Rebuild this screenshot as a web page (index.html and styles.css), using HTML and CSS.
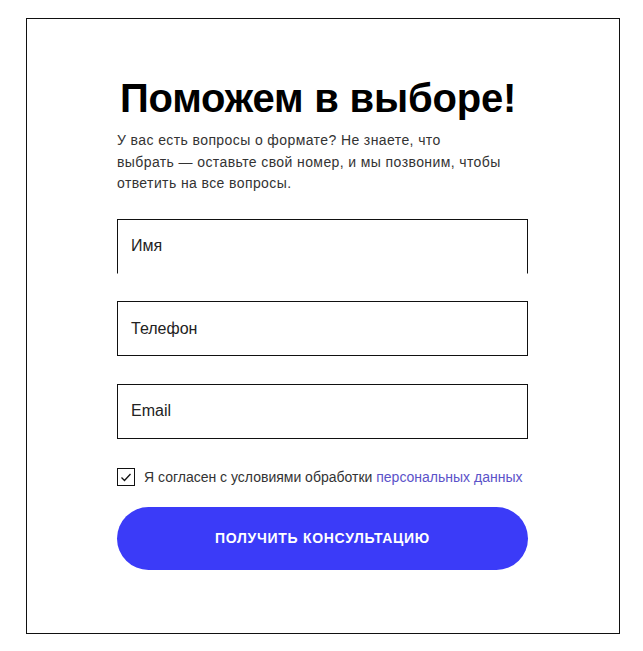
FILE: index.html
```html
<!DOCTYPE html>
<html lang="ru">
<head>
<meta charset="utf-8">
<title>Поможем в выборе!</title>
<link rel="stylesheet" href="styles.css">
</head>
<body>
<div class="frame">
  <form class="form">
    <h1 class="title">Поможем в выборе!</h1>
    <p class="lead">У вас есть вопросы о формате? Не знаете, что<br>выбрать — оставьте свой номер, и мы позвоним, чтобы<br>ответить на все вопросы.</p>
    <div class="fields">
      <label class="field field-open"><span class="placeholder">Имя</span></label>
      <label class="field"><span class="placeholder">Телефон</span></label>
      <label class="field"><span class="placeholder">Email</span></label>
    </div>
    <div class="agree">
      <span class="check">
        <svg width="14" height="14" viewBox="0 0 14 14"><path d="M2.5 7.5 L5.5 10.5 L11.5 4" fill="none" stroke="#111" stroke-width="1.3"/></svg>
      </span>
      <span class="agree-text">Я согласен с условиями обработки <a class="link" href="#">персональных данных</a></span>
    </div>
    <button type="button" class="submit">ПОЛУЧИТЬ КОНСУЛЬТАЦИЮ</button>
  </form>
</div>
</body>
</html>
```
FILE: styles.css
```css
html, body {
  margin: 0;
  padding: 0;
  background: #fff;
}
body {
  padding: 18px 0 0 26px;
  font-family: "Liberation Sans", Arial, sans-serif;
  color: #111;
}
.frame {
  box-sizing: border-box;
  width: 594px;
  height: 616px;
  border: 1px solid #111;
  padding: 0 0 0 90px;
}
.form {
  width: 411px;
  display: flex;
  flex-direction: column;
}
.title {
  margin: 55px 0 0 3px;
  font-size: 40px;
  line-height: 48px;
  font-weight: 700;
  letter-spacing: -0.2px;
  color: #000;
}
.lead {
  margin: 8px 0 0 0;
  font-size: 14px;
  line-height: 21.5px;
  letter-spacing: 0.4px;
  color: #333;
}
.fields {
  margin-top: 24px;
  display: flex;
  flex-direction: column;
  gap: 27.5px;
}
.field {
  box-sizing: border-box;
  height: 55px;
  border: 1px solid #111;
  display: flex;
  align-items: center;
  padding-left: 13px;
}
.field-open {
  border-bottom-color: transparent;
}
.placeholder {
  font-size: 16px;
  color: #222;
}
.agree {
  margin-top: 29px;
  display: flex;
  align-items: center;
  gap: 9px;
}
.check {
  box-sizing: border-box;
  width: 18px;
  height: 18px;
  border: 1.5px solid #111;
  display: flex;
  align-items: center;
  justify-content: center;
}
.agree-text {
  font-size: 14px;
  color: #333;
}
.link {
  color: #5b52c9;
  text-decoration: none;
}
.submit {
  margin-top: 21px;
  height: 63px;
  border: 0;
  border-radius: 32px;
  background: #3b3bf8;
  color: #fff;
  font-family: "Liberation Sans", Arial, sans-serif;
  font-size: 14px;
  font-weight: 700;
  letter-spacing: 0.7px;
}
```
